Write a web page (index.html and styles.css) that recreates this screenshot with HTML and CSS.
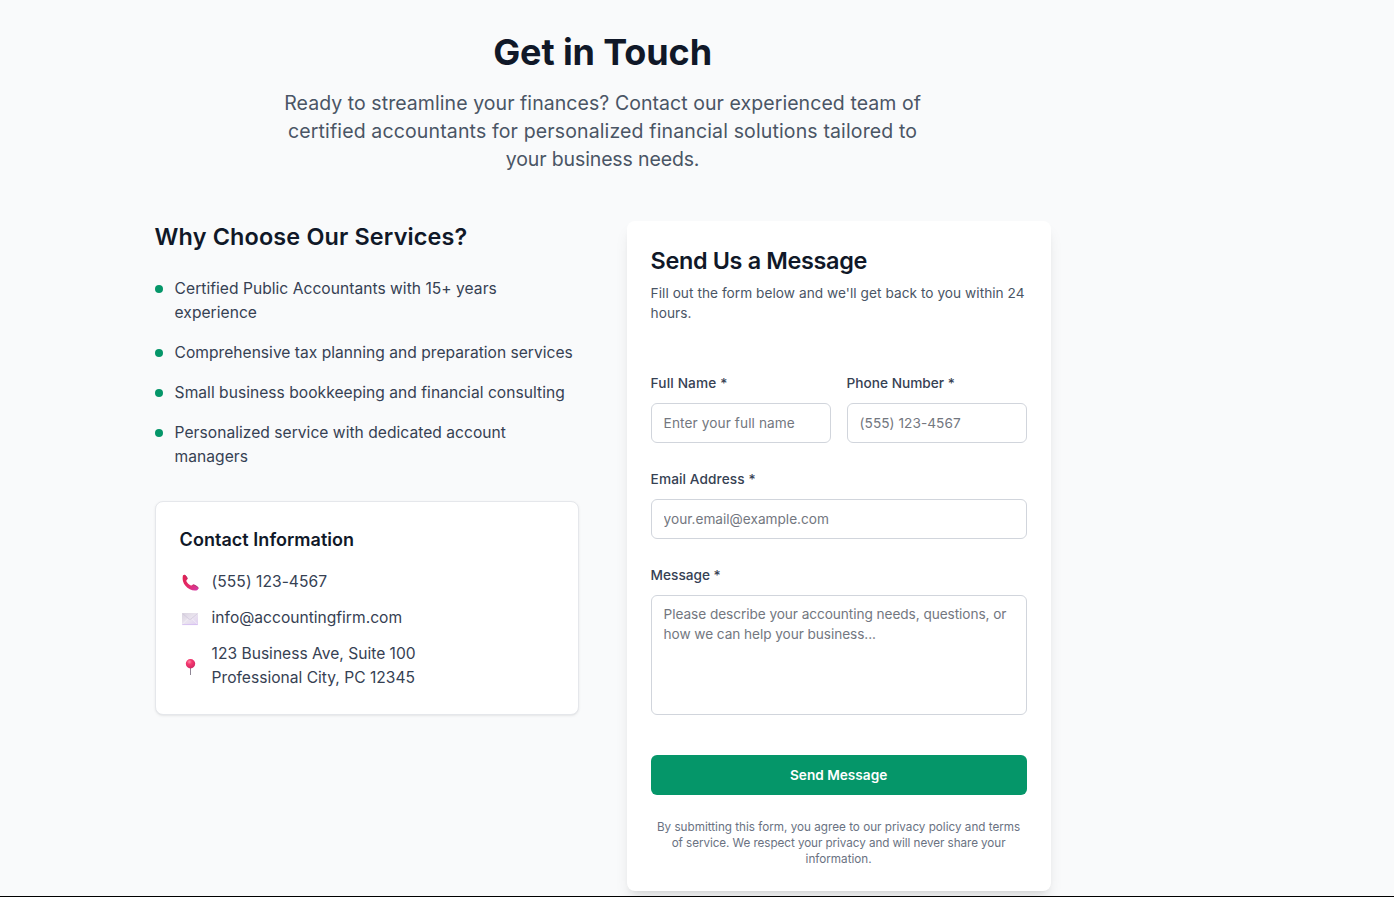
FILE: index.html
```html
<!DOCTYPE html>
<html lang="en">
<head>
<meta charset="utf-8">
<title>Get in Touch</title>
<link rel="stylesheet" href="styles.css">
</head>
<body>
<main class="page">
  <header class="hero">
    <h1 class="hero-title">Get in Touch</h1>
    <p class="hero-text">
      <span class="line t-a">Ready to streamline your finances? Contact our experienced team of</span>
      <span class="line t-b">certified accountants for personalized financial solutions tailored to</span>
      <span class="line t-c">your business needs.</span>
    </p>
  </header>

  <div class="columns">
    <section class="about">
      <h2 class="about-title">Why Choose Our Services?</h2>
      <ul class="benefits">
        <li class="benefit"><span class="dot"></span><span>Certified Public Accountants with 15+ years<br>experience</span></li>
        <li class="benefit"><span class="dot"></span><span class="snug">Comprehensive tax planning and preparation services</span></li>
        <li class="benefit"><span class="dot"></span><span>Small business bookkeeping and financial consulting</span></li>
        <li class="benefit"><span class="dot"></span><span>Personalized service with dedicated account<br>managers</span></li>
      </ul>

      <div class="info">
        <h3 class="info-title">Contact Information</h3>
        <div class="info-list">
          <div class="info-row">
            <svg class="icon" viewBox="0 0 20 24">
              <defs>
                <linearGradient id="phone" x1="0" y1="0" x2="1" y2="1"><stop offset="0" stop-color="#e0204f"/><stop offset=".55" stop-color="#e52b6b"/><stop offset="1" stop-color="#d03cae"/></linearGradient>
              </defs>
              <path fill="url(#phone)" d="M3 5.200 4.800 4.800C6 5.800 7.300 7.600 7.400 9 7.400 9.900 6.100 10.300 6.300 11.100 6.800 12.700 9.200 15 10.900 15.600 11.700 15.800 12.300 14.500 13.200 14.500 14.900 14.900 17.300 16.400 18.700 18.100L17.500 20C15.600 20.900 12.400 20.600 9.800 19.300 6.400 17.500 3.900 14.500 3 11.200 2.500 9.300 2.500 7 3 5.200Z"/>
              <path fill="none" stroke="#a52a62" stroke-width=".8" d="M4.900 5C6.200 6.100 7.300 7.700 7.300 9M13.300 14.700c1.700.4 3.900 1.800 5.200 3.300"/>
            </svg>
            <span class="phone">(555) 123-4567</span>
          </div>
          <div class="info-row">
            <svg class="icon" viewBox="0 0 20 24">
              <defs>
                <linearGradient id="mail" x1="0" y1="0" x2="1" y2="1"><stop offset="0" stop-color="#d9d3df"/><stop offset=".5" stop-color="#eae4ef"/><stop offset="1" stop-color="#e0cff2"/></linearGradient>
              </defs>
              <rect x="2" y="7" width="16" height="12" rx=".7" fill="url(#mail)"/>
              <path d="M2.500 18.200 8.200 12.500M17.500 18.200l-5.700-5.700" stroke="#f7f2fb" stroke-width=".7" fill="none"/>
              <path d="m2.500 7.500 6.600 5.600q.9.700 1.800 0l6.600-5.600" stroke="#cabfd6" stroke-width=".6" fill="none"/>
              <path d="M2.300 18.600h15.400" stroke="#d2baf0" stroke-width=".8"/>
            </svg>
            <span>info@accountingfirm.com</span>
          </div>
          <div class="info-row">
            <svg class="icon" viewBox="0 0 20 24">
              <defs>
                <radialGradient id="pin" cx=".38" cy=".3" r=".75"><stop offset="0" stop-color="#ff88a8"/><stop offset=".35" stop-color="#f5396f"/><stop offset="1" stop-color="#cf2563"/></radialGradient>
              </defs>
              <path d="M10.500 13v8" stroke="#8f8796" stroke-width="1"/>
              <circle cx="10.500" cy="9.800" r="4.700" fill="url(#pin)"/>
            </svg>
            <span>123 Business Ave, Suite 100<br>Professional City, PC 12345</span>
          </div>
        </div>
      </div>
    </section>

    <section class="card">
      <h2 class="card-title">Send Us a Message</h2>
      <p class="card-text">Fill out the form below and we'll get back to you within 24<br>hours.</p>
      <form class="form">
        <div class="pair">
          <div class="field">
            <label class="label wide" for="name">Full Name *</label>
            <input class="input mid" id="name" type="text" placeholder="Enter your full name">
          </div>
          <div class="field">
            <label class="label" for="tel">Phone Number *</label>
            <input class="input tel" id="tel" type="text" placeholder="(555) 123-4567">
          </div>
        </div>
        <div class="field">
          <label class="label mid" for="email">Email Address *</label>
          <input class="input" id="email" type="text" placeholder="your.email@example.com">
        </div>
        <div class="field">
          <label class="label" for="message">Message *</label>
          <textarea class="input area" id="message" placeholder="Please describe your accounting needs, questions, or how we can help your business..."></textarea>
        </div>
        <button class="button" type="button">Send Message</button>
      </form>
      <p class="terms">
        <span class="line">By submitting this form, you agree to our privacy policy and terms</span>
        <span class="line t-d">of service. We respect your privacy and will never share your</span>
        <span class="line">information.</span>
      </p>
    </section>
  </div>
</main>
</body>
</html>
```
FILE: styles.css
```css
* { box-sizing: border-box; margin: 0; padding: 0; }

body {
  height: 897px;
  overflow: hidden;
  background: #f9fafb;
  color: #364153;
  font: 15.6px/24px Inter, "Liberation Sans", sans-serif;
}

.page {
  height: 897px;
  padding: 32px 0 0 154.6px;
  border-bottom: 1px solid #000;
}

.line { display: block; white-space: nowrap; }

.hero { width: 896px; margin-bottom: 48px; text-align: center; }
.hero-title { font-size: 36px; line-height: 40px; font-weight: 700; letter-spacing: -.12px; color: #101828; }
.hero-text { margin-top: 17px; font-size: 19.5px; line-height: 28px; color: #4a5565; }
.t-a { letter-spacing: .062px; }
.t-b { letter-spacing: .14px; }
.t-c { letter-spacing: -.135px; }
.t-d { letter-spacing: -.065px; }

.columns { display: grid; grid-template-columns: 424px 424px; gap: 48px; align-items: start; }

.about-title { font-size: 23.4px; line-height: 32px; font-weight: 600; letter-spacing: .157px; color: #101828; }
.benefits { display: flex; flex-direction: column; gap: 16px; margin-top: 24px; list-style: none; }
.benefit { display: flex; gap: 12px; letter-spacing: .027px; white-space: nowrap; }
.snug { letter-spacing: .011px; }
.dot { flex: none; width: 8px; height: 8px; margin-top: 8px; border-radius: 50%; background: #059669; }

.info {
  margin-top: 32px;
  padding: 24px;
  border: 1px solid #e5e7eb;
  border-radius: 8px;
  background: #fff;
  box-shadow: 0 1px 3px rgba(0, 0, 0, .07), 0 1px 2px -1px rgba(0, 0, 0, .07);
}
.info-title { font-size: 18px; line-height: 28px; font-weight: 600; letter-spacing: .04px; color: #101828; }
.info-list { display: flex; flex-direction: column; gap: 12px; margin-top: 16px; }
.info-row { display: flex; align-items: center; gap: 12px; }
.phone { letter-spacing: .04px; }
.icon { flex: none; width: 20px; height: 24px; }

.card {
  height: 670px;
  padding: 24px;
  border-radius: 8px;
  background: #fff;
  box-shadow: 0 10px 15px -3px rgba(0, 0, 0, .1), 0 4px 6px -4px rgba(0, 0, 0, .1);
}
.card-title { font-size: 23.4px; line-height: 32px; font-weight: 600; letter-spacing: -.34px; color: #101828; }
.card-text { margin-top: 6px; font-size: 13.65px; line-height: 20px; letter-spacing: .05px; color: #4a5565; white-space: nowrap; }

.form { display: flex; flex-direction: column; gap: 26px; margin-top: 50px; }
.pair { display: grid; grid-template-columns: 1fr 1fr; gap: 16px; }
.field { display: flex; flex-direction: column; gap: 10px; min-width: 0; }
.label { font-size: 13.65px; line-height: 20px; font-weight: 500; }
.input {
  width: 100%;
  height: 40px;
  padding: 8px 12px;
  border: 1px solid #d1d5dc;
  border-radius: 6px;
  outline: 0;
  background: #fff;
  font: 13.65px/20px Inter, "Liberation Sans", sans-serif;
}
.input::placeholder { color: #737780; opacity: 1; }
.wide { letter-spacing: .15px; }
.mid { letter-spacing: .1px; }
.tel { letter-spacing: .04px; }
.area { height: 120px; resize: none; letter-spacing: -.065px; }
.button {
  height: 40px;
  margin-top: 14px;
  border: 0;
  border-radius: 6px;
  background: #059669;
  color: #fff;
  font: 600 13.65px/20px Inter, "Liberation Sans", sans-serif;
}
.terms { margin-top: 24px; font-size: 11.7px; line-height: 16px; text-align: center; color: #6a7282; }
```
